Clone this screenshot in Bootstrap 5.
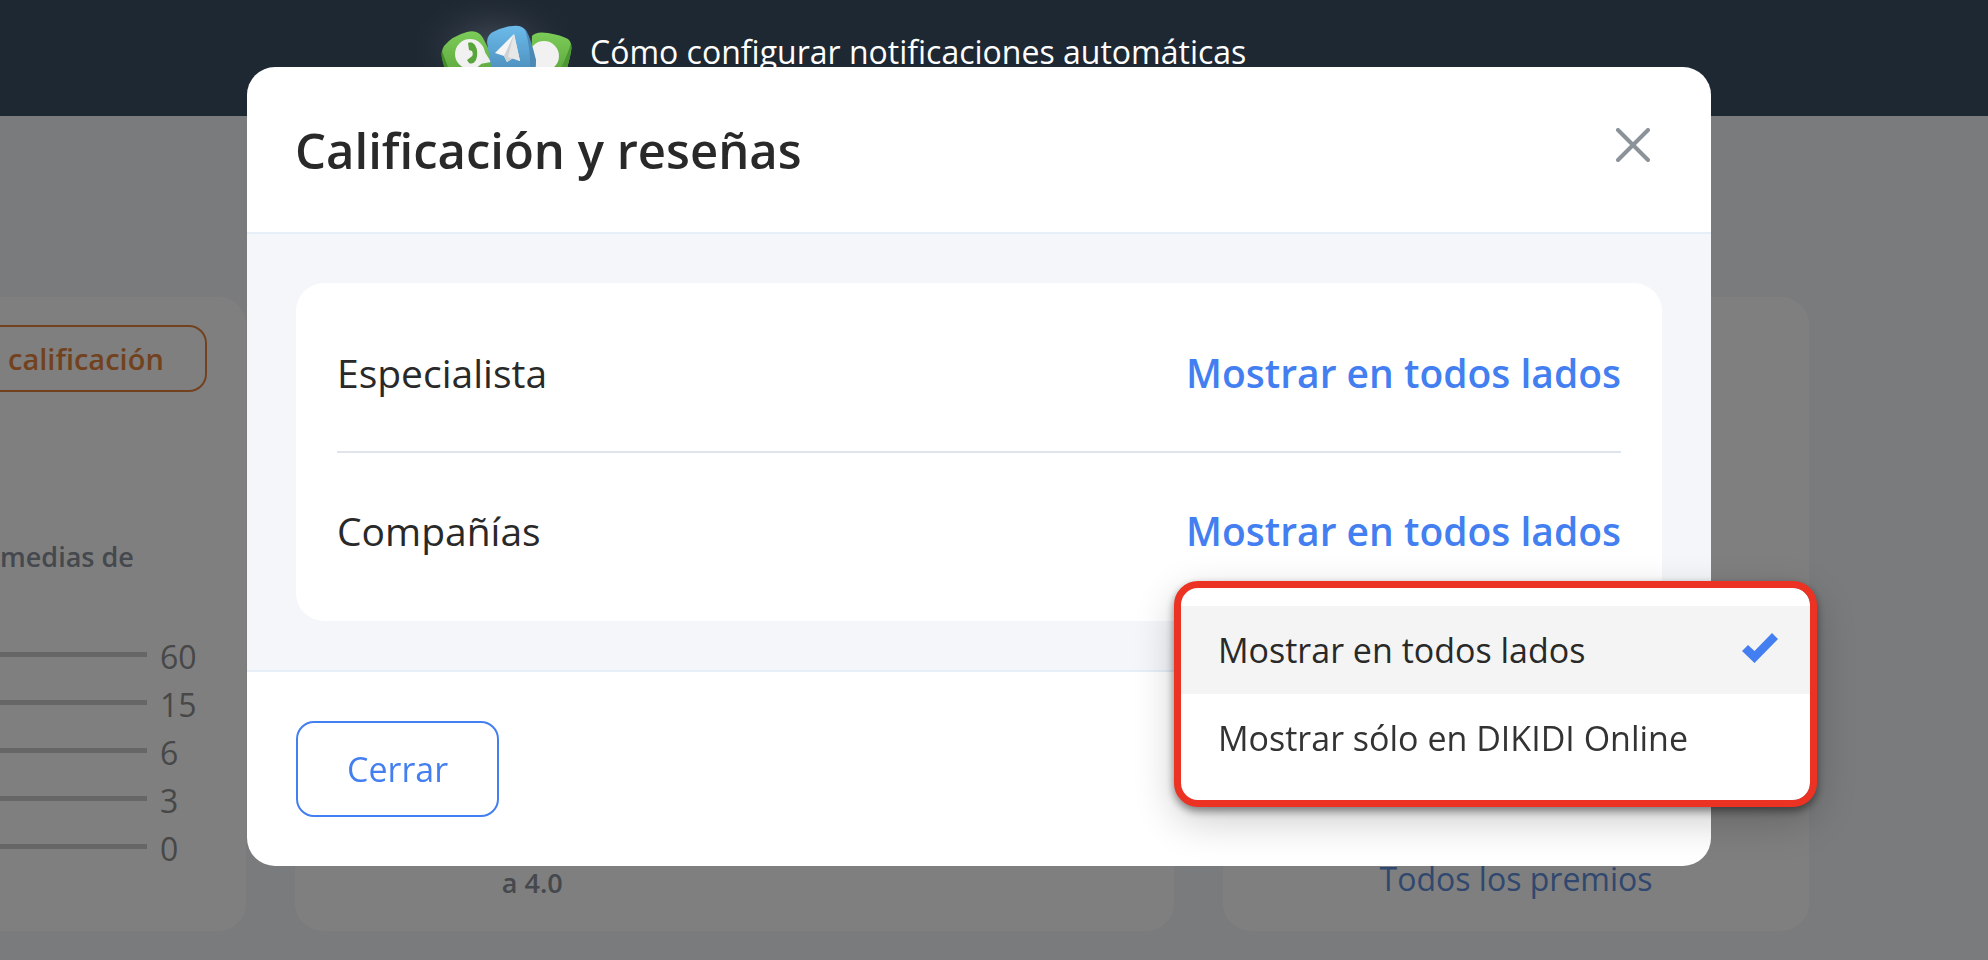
<!DOCTYPE html>
<html lang="es">
<head>
<meta charset="utf-8">
<meta name="viewport" content="width=device-width, initial-scale=1">
<title>Calificación y reseñas</title>
<link rel="stylesheet" href="https://cdn.jsdelivr.net/npm/bootstrap@5.3.0/dist/css/bootstrap.min.css">
<style>
  body { font-family: "Open Sans", "Noto Sans", sans-serif; background: #f5f7fa; color: #292929; font-size: 32px; line-height: 48px; }
  .promo-bar { position: relative; z-index: 1052; background: #1e2833; height: 116px; padding-left: 400px; }
  .promo-art { width: 190px; height: 116px; }
  .page-modal { z-index: 1055; padding-right: 30px !important; }
  .page-modal .modal-dialog { max-width: 1464px; margin-top: 67px; }
  .page-modal .modal-content { border: 0; border-radius: 28px; }
  .page-modal .modal-header { padding: 48px; border-bottom: 2px solid #e7eef7; height: 167px; border-radius: 0; }
  .page-modal .modal-title { font-size: 49px; line-height: 68px; font-weight: 600; }
  .page-modal .modal-body { background: #f4f6fa; padding: 49px; }
  .page-modal .modal-footer { border-top: 2px solid #e7eef7; padding: 49px; border-radius: 0; }
  .modal-footer > * { margin: 0; }
  .close-btn { width: 34px; height: 34px; margin-right: 13px; margin-bottom: 10px; line-height: 0; }
  .settings-card { border-radius: 28px; padding: 12px 41px; }
  .setting { font-size: 39px; line-height: 56px; padding: 50px 0; }
  .setting + .setting { border-top: 2px solid #dfe3ec; }
  .choice { font: inherit; font-weight: 600; color: #437ff0; background: none; border: 0; padding: 0; }
  .btn-cerrar { font-size: 34px; line-height: 48px; padding: 22px 49px; border: 2px solid #437ff0; border-radius: 18px; color: #437ff0; }
  .choice-menu { top: 100%; right: -196px; left: auto; margin-top: 22px; width: 643px; padding: 18px 0; border: 7px solid #ec3223; border-radius: 24px; --bs-dropdown-bg: #fff; box-shadow: 0 4px 8px rgba(0,0,0,.45), 0 14px 40px rgba(0,0,0,.2); }
  .choice-menu .dropdown-item { font-size: 34px; line-height: 48px; padding: 20px 32px 20px 37px; color: #333; }
  .choice-menu .dropdown-item.chosen { background: #f4f4f4; color: #292929; }
  .stats { display: grid; grid-template-columns: 246fr 879fr 586fr; padding-top: 181px; padding-right: 9%; gap: 49px; }
  .panel { background: #fff; border-radius: 28px; height: 634px; min-width: 0; }
  .panel-a { border-radius: 0 28px 28px 0; padding: 28px 38px 0 0; }
  .panel-c { padding-bottom: 28px; }
  .btn-rating { color: #e5843f; font-size: 29px; font-weight: 600; line-height: 41px; border: 2px solid #e5843f; border-left: 0; border-radius: 0 18px 18px 0; padding: 11px 41px 11px 8px; }
  .caption { color: #8a919b; font-weight: 600; font-size: 27px; line-height: 40px; }
  .panel-a .caption { margin: 145px 0 56px; }
  .tally { color: #8f8f8f; padding-right: 12px; }
  .tally .bar { background: #cdcdcd; height: 5px; margin-bottom: 5px; }
  .tally .num { width: 36px; margin-left: 13px; }
  .chart-col { width: 54%; padding-bottom: 28px; }
  .awards { color: #6290dd; }
</style>
</head>
<body class="modal-open overflow-hidden">
<header class="promo-bar">
  <a href="#" class="d-flex text-white text-decoration-none">
    <svg class="promo-art flex-shrink-0" viewBox="400 0 190 116" aria-hidden="true">
      <defs>
        <radialGradient id="glow"><stop offset="0" stop-color="#5a616a" stop-opacity=".7"/><stop offset="1" stop-color="#1e2833" stop-opacity="0"/></radialGradient>
        <linearGradient id="leaf" x2="0" y2="1"><stop offset="0" stop-color="#7ccc58"/><stop offset="1" stop-color="#549b36"/></linearGradient>
        <linearGradient id="sky" x2="0" y2="1"><stop offset="0" stop-color="#6cbbea"/><stop offset="1" stop-color="#4889b8"/></linearGradient>
      </defs>
      <ellipse cx="494" cy="48" rx="88" ry="60" fill="url(#glow)"/>
      <path d="M444 46Q452 36 467 32Q478 29 483 38L500 72L480 90H456L443 62Q440 52 444 46Z" fill="url(#leaf)"/>
      <path d="M442 51L449 70H445Q440 54 442 51Z" fill="#438b2b"/>
      <circle cx="470" cy="54" r="15" fill="#f1f1f1"/><path d="M483 49L491 62L480 64Z" fill="#efefef"/>
      <path d="M468 43Q472 41 475 45Q479 52 476 60Q473 65 469 63L467 60L471 57Q474 55 472 51L469 50Z" fill="#58a63b"/>
      <path d="M532 36Q536 31 548 33Q561 35 568 39Q573 43 571 52L563 86H530Z" fill="url(#leaf)"/>
      <path d="M571 43Q572 55 566 70H560Q568 54 571 43Z" fill="#4b9732"/>
      <circle cx="544" cy="56" r="15" fill="#f1f1f1"/>
      <path d="M487 42Q487 34 495 31Q508 25 519 26Q525 27 528 35L536 61Q536 68 533 78H493Z" fill="url(#sky)"/>
      <path d="M525 29Q530 35 536 60L535 73H530Q531 48 525 29Z" fill="#4d89b5"/>
      <path d="M514 34L495 53L504 56L507 62L513 58L520 61Z" fill="#f5f5f5"/>
      <path d="M514 34L504 56L507 62L513 58Z" fill="#cfd2d4"/><path d="M514 34L508 57L520 61Z" fill="#e7e7e7"/>
    </svg>
    <span class="pt-4 mt-1 text-nowrap">Cómo configurar notificaciones automáticas</span>
  </a>
</header>

<main class="stats">
  <section class="panel panel-a">
    <button type="button" class="btn-rating bg-transparent d-block">calificación</button>
    <p class="caption text-nowrap">medias de</p>
    <div class="tally">
      <div class="d-flex align-items-center"><div class="bar flex-fill"></div><span class="num">60</span></div>
      <div class="d-flex align-items-center"><div class="bar flex-fill"></div><span class="num">15</span></div>
      <div class="d-flex align-items-center"><div class="bar flex-fill"></div><span class="num">6</span></div>
      <div class="d-flex align-items-center"><div class="bar flex-fill"></div><span class="num">3</span></div>
      <div class="d-flex align-items-center"><div class="bar flex-fill"></div><span class="num">0</span></div>
    </div>
  </section>
  <section class="panel d-flex align-items-end">
    <div class="chart-col caption text-center">a 4.0</div>
  </section>
  <section class="panel panel-c d-flex align-items-end justify-content-center">
    <a href="#" class="awards text-decoration-none">Todos los premios</a>
  </section>
</main>

<div class="modal-backdrop show"></div>

<div class="modal page-modal show d-block" tabindex="-1" role="dialog" aria-labelledby="modal-title">
  <div class="modal-dialog">
    <div class="modal-content">
      <div class="modal-header">
        <h1 class="modal-title" id="modal-title">Calificación y reseñas</h1>
        <button type="button" class="close-btn bg-transparent border-0 p-0" aria-label="Cerrar ventana">
          <svg width="34" height="34" viewBox="0 0 34 34" fill="none" stroke="#8b929a" stroke-width="4" stroke-linecap="round"><path d="M2 2L32 32M32 2L2 32"/></svg>
        </button>
      </div>
      <div class="modal-body">
        <div class="settings-card bg-white">
          <div class="setting d-flex justify-content-between">
            <span>Especialista</span>
            <button type="button" class="choice">Mostrar en todos lados</button>
          </div>
          <div class="setting d-flex justify-content-between">
            <span>Compañías</span>
            <div class="dropdown">
              <button type="button" class="choice d-block" aria-expanded="true">Mostrar en todos lados</button>
              <ul class="dropdown-menu choice-menu show">
                <li><button type="button" class="dropdown-item chosen d-flex justify-content-between align-items-center">Mostrar en todos lados
                  <svg width="36" height="30" viewBox="0 0 36 30" class="mb-1" aria-hidden="true"><path fill="#437ff0" d="M30 0L36 6L12.500 30L0 18L6 12L12.500 18Z"/></svg></button></li>
                <li><button type="button" class="dropdown-item">Mostrar sólo en DIKIDI Online</button></li>
              </ul>
            </div>
          </div>
        </div>
      </div>
      <div class="modal-footer justify-content-start">
        <button type="button" class="btn btn-cerrar">Cerrar</button>
      </div>
    </div>
  </div>
</div>
<script src="https://cdn.jsdelivr.net/npm/bootstrap@5.3.0/dist/js/bootstrap.bundle.min.js"></script>
</body>
</html>
